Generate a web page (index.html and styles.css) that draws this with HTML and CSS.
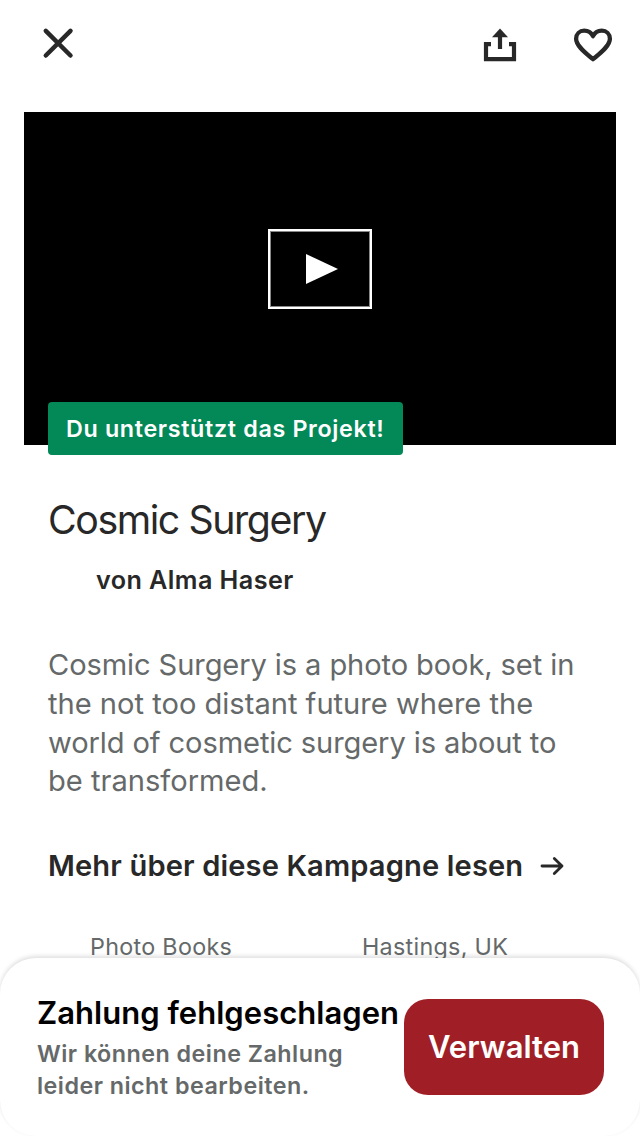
FILE: index.html
```html
<!DOCTYPE html>
<html lang="de">
<head>
<meta charset="utf-8">
<title>Cosmic Surgery</title>
<link rel="stylesheet" href="styles.css">
</head>
<body>
<div class="screen">
  <header class="topbar">
    <svg class="icon-close" viewBox="0 0 32 32" fill="none" stroke="currentColor" stroke-width="4.5" stroke-linecap="round"><path d="M3.8 3.8L28.5 28.5M28.5 3.8L3.8 28.5"/></svg>
    <svg class="icon-share" viewBox="0 0 36 36" fill="none" stroke="currentColor" stroke-width="4.2"><path d="M9 17.2H4V32.2H32V17.2H27M18 22V8"/><path d="M18 1.5L26 10.3H10Z" fill="currentColor" stroke="none"/></svg>
    <svg class="icon-heart" viewBox="0 0 40 36" fill="none" stroke="currentColor" stroke-width="4.3" stroke-linejoin="round"><path d="M20 32.2C13 26.3 3.1 19.2 3.1 11.8C3.1 7 6.6 3.7 11.2 3.7C15 3.7 18.4 5.8 20 9.2C21.6 5.8 25 3.7 28.8 3.7C33.4 3.7 36.9 7 36.9 11.8C36.9 19.2 27 26.3 20 32.2Z"/></svg>
  </header>
  <section class="video">
    <div class="play"><svg class="play-icon" viewBox="0 0 32 30"><path d="M0 0L32 15L0 30Z" fill="#fff"/></svg></div>
    <div class="badge"><span class="badge-text">Du unterstützt das Projekt!</span></div>
  </section>
  <main class="content">
    <h1 class="title">Cosmic Surgery</h1>
    <div class="author">von Alma Haser</div>
    <p class="blurb"><span class="tight">Cosmic Surgery is a photo book, set in</span><br>the not too distant future where the<br><span class="tight">world of cosmetic surgery is about to</span><br>be transformed.</p>
    <div class="more"><span class="more-text">Mehr über diese Kampagne lesen</span>
      <svg class="icon-arrow" viewBox="0 0 24 20" fill="none" stroke="currentColor" stroke-width="2.8" stroke-linecap="round" stroke-linejoin="round"><path d="M2 10H22M14.3 2.4L22 10L14.3 17.6"/></svg>
    </div>
    <div class="meta"><span class="category">Photo Books</span><span class="place">Hastings, UK</span></div>
  </main>
  <footer class="sheet">
    <div class="notice">
      <div class="notice-title">Zahlung fehlgeschlagen</div>
      <div class="notice-text">Wir können deine Zahlung<br>leider nicht bearbeiten.</div>
    </div>
    <button class="manage"><span class="manage-text">Verwalten</span></button>
  </footer>
</div>
</body>
</html>
```
FILE: styles.css
```css
* { box-sizing: border-box; }
body { margin: 0; background: #fff; color: #282828; font-family: Inter, "Liberation Sans", sans-serif; }
.screen { position: relative; width: 640px; height: 1136px; overflow: hidden; background: #fff; white-space: nowrap; }
.topbar { display: flex; height: 112px; padding-left: 42px; align-items: flex-start; }
.icon-close { width: 32px; height: 32px; margin-top: 27px; }
.icon-share { width: 36px; height: 36px; margin: 27px 0 0 408px; }
.icon-heart { width: 40px; height: 36px; margin: 27px 0 0 55px; }
.video { position: relative; width: 592px; height: 333px; margin-left: 24px; padding-top: 117px; background: #000; }
.play { display: flex; align-items: center; width: 104px; height: 80px; margin: 0 auto; padding-left: 36px; border: 2px solid #fff; box-shadow: inset 0 0 0 1px #888; }
.play-icon { width: 32px; height: 30px; }
.badge { position: absolute; left: 24px; top: 290px; width: 355px; height: 53px; padding-left: 18px; border-radius: 4px; background: #038858; color: #fff; font-size: 23.3px; font-weight: 560; line-height: 53px; letter-spacing: .66px; }
.content { padding-left: 48px; }
.title { margin: 51px 0 0; font-size: 39.3px; font-weight: 400; line-height: 48px; letter-spacing: -1.42px; }
.author { margin: 20px 0 0 48px; font-size: 25.2px; font-weight: 600; line-height: 32px; letter-spacing: .42px; }
.blurb { margin: 50px 0 0; color: #656969; font-size: 29.1px; line-height: 38.8px; }
.tight { letter-spacing: -.11px; }
.more { display: flex; align-items: center; margin-top: 44.6px; font-size: 29.1px; font-weight: 600; line-height: 40px; letter-spacing: .14px; }
.icon-arrow { width: 24px; height: 20px; margin-left: 16.5px; }
.meta { display: grid; grid-template-columns: 272px 1fr; margin-top: 46px; padding-left: 42px; color: #656969; font-size: 23.3px; line-height: 30px; letter-spacing: .3px; }
.sheet { position: absolute; left: 0; top: 958px; display: flex; width: 640px; height: 178px; padding: 37px 36px 0 37px; border-radius: 36px; background: #fff; box-shadow: 0 -2px 4px rgba(0,0,0,.13); }
.notice { width: 367px; }
.notice-title { color: #000; font-size: 31px; font-weight: 600; line-height: 36px; letter-spacing: .03px; }
.notice-text { margin-top: 7px; color: #656969; font-size: 23.3px; font-weight: 600; line-height: 32px; letter-spacing: .48px; }
.manage { display: flex; align-items: center; justify-content: center; width: 200px; height: 96px; margin-top: 4px; padding: 0 0 2px; border: 0; border-radius: 24px; background: #a01f26; color: #fff; font-family: inherit; font-size: 31px; font-weight: 600; }
```
